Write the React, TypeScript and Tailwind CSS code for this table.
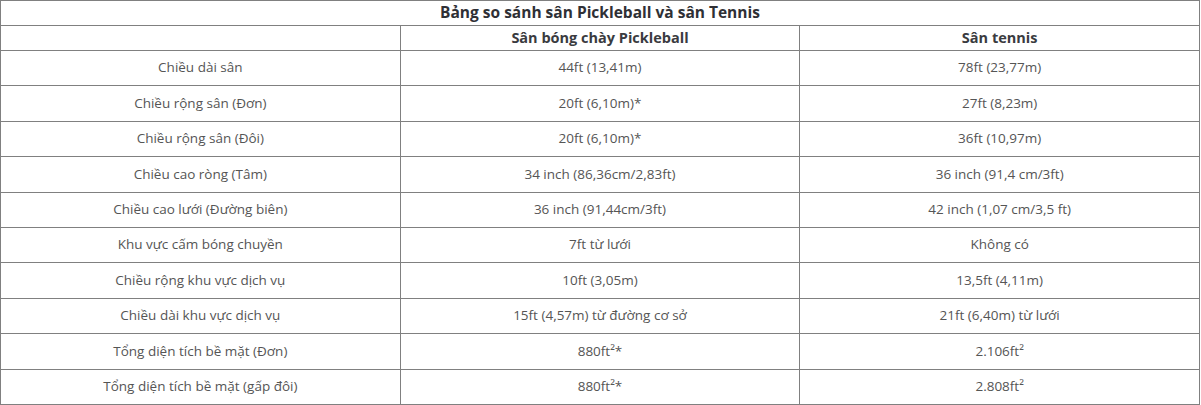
const rows: [string, string, string][] = [
  ["Chiều dài sân", "44ft (13,41m)", "78ft (23,77m)"],
  ["Chiều rộng sân (Đơn)", "20ft (6,10m)*", "27ft (8,23m)"],
  ["Chiều rộng sân (Đôi)", "20ft (6,10m)*", "36ft (10,97m)"],
  ["Chiều cao ròng (Tâm)", "34 inch (86,36cm/2,83ft)", "36 inch (91,4 cm/3ft)"],
  ["Chiều cao lưới (Đường biên)", "36 inch (91,44cm/3ft)", "42 inch (1,07 cm/3,5 ft)"],
  ["Khu vực cấm bóng chuyền", "7ft từ lưới", "Không có"],
  ["Chiều rộng khu vực dịch vụ", "10ft (3,05m)", "13,5ft (4,11m)"],
  ["Chiều dài khu vực dịch vụ", "15ft (4,57m) từ đường cơ sở", "21ft (6,40m) từ lưới"],
  ["Tổng diện tích bề mặt (Đơn)", "880ft²*", "2.106ft²"],
  ["Tổng diện tích bề mặt (gấp đôi)", "880ft²*", "2.808ft²"],
];

export default function App() {
  return (
    <div className="w-[1201px] h-[405px] bg-white font-['Open_Sans',sans-serif]">
      <table className="w-[1200px] border-collapse table-fixed text-center">
        <tbody>
          <tr className="h-[25px]">
            <td colSpan={3} className="border border-[#808080] text-[15.5px] font-bold text-[#2f3035] leading-none">
              Bảng so sánh sân Pickleball và sân Tennis
            </td>
          </tr>
          <tr className="h-[25px]">
            <td className="w-[399px] border border-[#808080]"></td>
            <td className="w-[400px] border border-[#808080] text-[14.5px] font-bold text-[#3a3b40] leading-none">
              Sân bóng chày Pickleball
            </td>
            <td className="border border-[#808080] text-[14.5px] font-bold text-[#3a3b40] leading-none">
              Sân tennis
            </td>
          </tr>
          {rows.map((r) => (
            <tr key={r[0]} className="h-[35.4px]">
              {r.map((c, i) => (
                <td key={i} className="border border-[#808080] text-[13.5px] text-[#555555] leading-none">
                  {c}
                </td>
              ))}
            </tr>
          ))}
        </tbody>
      </table>
    </div>
  );
}
